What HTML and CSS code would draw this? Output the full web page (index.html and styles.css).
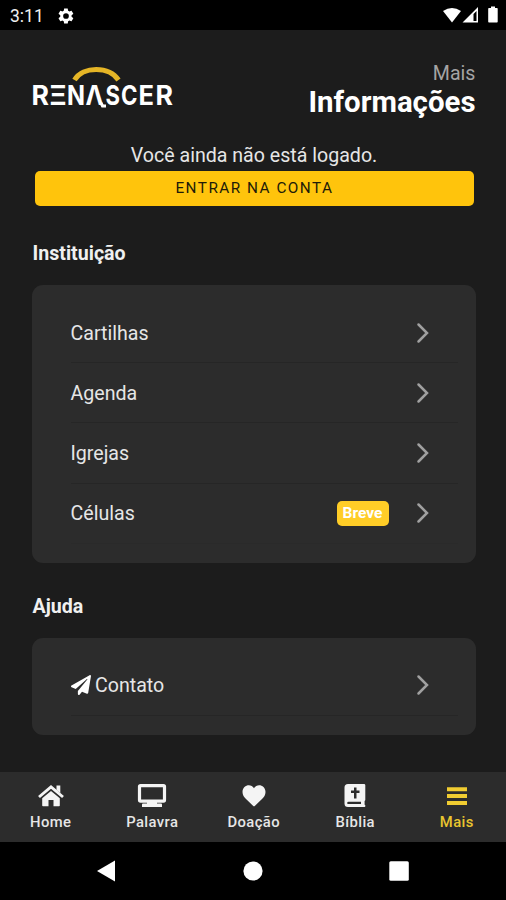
FILE: index.html
```html
<!DOCTYPE html>
<html lang="pt-BR">
<head>
<meta charset="utf-8">
<meta name="viewport" content="width=device-width, initial-scale=1">
<title>Renascer</title>
<link rel="stylesheet" href="styles.css">
</head>
<body>
<div class="status">
  <span class="clock">3:11</span>
  <svg class="gear" width="18" height="18" viewBox="0 0 24 24"><path fill="#fff" d="M19.4 13a7.5 7.5 0 0 0 0-2l2.1-1.6c.2-.2.3-.4.1-.7l-2-3.4c-.1-.2-.4-.3-.6-.2l-2.5 1c-.5-.4-1.100-.7-1.700-1l-.4-2.600c0-.3-.2-.5-.5-.5h-4c-.3 0-.5.2-.5.5L9 5.100c-.6.300-1.200.6-1.700 1l-2.500-1c-.2-.1-.5 0-.6.2l-2 3.400c-.1.3-.1.5.1.7L4.400 11a7.500 7.500 0 0 0 0 2l-2.100 1.600c-.2.2-.2.400-.1.7l2 3.400c.1.2.4.3.6.2l2.500-1c.5.400 1.100.7 1.700 1l.4 2.600c0 .3.200.5.500.5h4c.3 0 .5-.2.500-.5l.4-2.600c.6-.3 1.200-.6 1.700-1l2.500 1c.2.100.5 0 .6-.2l2-3.400c.1-.3.100-.5-.1-.7L19.400 13zM12 15.800a3.800 3.800 0 1 1 0-7.600 3.800 3.800 0 0 1 0 7.600z"/></svg>
  <svg class="signals" width="58" height="20" viewBox="0 0 58 20"><g fill="#fff"><path d="M1 4Q10 -2 19 4L10 15.500z"/><path d="M36 0v15.500H20.500zM31.500 7v7H34.500V4z" fill-rule="evenodd"/><path d="M47 1h2V-.5h4V1h2q.7 0 .7.8v13q0 .7-.7.700h-8q-.8 0-.8-.7v-13q0-.8.8-.8z"/></g></svg>
</div>
<main class="page">
  <header class="header">
    <svg class="logo" width="146" height="48" viewBox="0 0 146 48" aria-label="Renascer">
      <path d="M43.500 19C52 5 78 5 87.500 19" transform="translate(0 -1)" fill="none" stroke="#e5b526" stroke-width="5"/>
      <g class="wordmark">
        <text x="0.500" y="42.500" textLength="17.500" lengthAdjust="spacingAndGlyphs">R</text>
        <text x="18.500" y="42.500" textLength="17" lengthAdjust="spacingAndGlyphs">Ξ</text>
        <text x="36" y="42.500" textLength="18" lengthAdjust="spacingAndGlyphs">N</text>
        <text x="54.500" y="42.500" textLength="18" lengthAdjust="spacingAndGlyphs">Λ</text>
        <text x="74.500" y="42.500" textLength="14.500" lengthAdjust="spacingAndGlyphs">S</text>
        <text x="90" y="42.500" textLength="16.500" lengthAdjust="spacingAndGlyphs">C</text>
        <text x="107.500" y="42.500" textLength="15.500" lengthAdjust="spacingAndGlyphs">E</text>
        <text x="124.500" y="42.500" textLength="17.500" lengthAdjust="spacingAndGlyphs">R</text>
      </g>
      <path d="M70 41l1.500 3h3.500" fill="none" stroke="#fff" stroke-width="3"/>
    </svg>
    <div class="heading"><div class="kicker">Mais</div><h1>Informações</h1></div>
  </header>
  <section class="login">
    <p>Você ainda não está logado.</p>
    <button>ENTRAR NA CONTA</button>
  </section>
  <h2>Instituição</h2>
  <div class="card">
    <div class="row"><span>Cartilhas</span><svg class="chev" viewBox="0 0 14 22"><path d="M2.500 2.500l8.500 8.500-8.500 8.500"/></svg></div>
    <div class="row"><span>Agenda</span><svg class="chev" viewBox="0 0 14 22"><path d="M2.500 2.500l8.500 8.500-8.500 8.500"/></svg></div>
    <div class="row"><span>Igrejas</span><svg class="chev" viewBox="0 0 14 22"><path d="M2.500 2.500l8.500 8.500-8.500 8.500"/></svg></div>
    <div class="row faint"><span>Células</span><b class="badge">Breve</b><svg class="chev" viewBox="0 0 14 22"><path d="M2.500 2.500l8.500 8.500-8.500 8.500"/></svg></div>
  </div>
  <h2 class="help">Ajuda</h2>
  <div class="card">
    <div class="row contact"><svg class="plane" width="20" height="20" viewBox="0 0 512 512"><path fill="#fff" d="M476 3.200L12.500 270.600c-18.100 10.400-15.800 35.600 2.200 43.200L121 358.400l287.300-253.200c5.500-4.900 13.300 2.600 8.600 8.300L176 407v80.500c0 23.600 28.500 32.900 42.500 15.800L282 426l124.600 52.200c14.200 6 30.400-2.900 33-18.200l72-432C515 7.800 493.300-6.800 476 3.200z"/></svg><span>Contato</span><svg class="chev" viewBox="0 0 14 22"><path d="M2.500 2.500l8.500 8.500-8.500 8.500"/></svg></div>
  </div>
</main>
<nav class="tabs">
  <a><svg width="28" height="26" viewBox="0 0 28 26"><path fill="none" stroke="#f4f4f4" stroke-width="2.900" d="M2 14L14 4l12 10"/><path fill="#f4f4f4" d="M19.500 2.500h3.800v7.500l-3.800-3zM14 8l8.800 7.300v7.200q0 .8-.8.800h-5.500v-6.300h-5v6.300H6q-.8 0-.8-.8v-7.200z"/></svg><span>Home</span></a>
  <a><svg width="30" height="26" viewBox="0 0 30 26"><path fill="none" stroke="#f4f4f4" stroke-width="3.200" d="M3.500 2.600h23q1 0 1 1v13.500q0 1-1 1h-23q-1 0-1-1V3.600q0-1 1-1z"/><path fill="#f4f4f4" d="M10 19h10v1.500h4q1 0 1 1v2.500H5v-2.500q0-1 1-1h4z"/></svg><span>Palavra</span></a>
  <a><svg width="26" height="26" viewBox="0 0 26 26"><path fill="#f4f4f4" d="M13 5.200C16-.2 24.500 1.800 24.500 9c0 3-1.500 5-3.500 7l-7 6.800q-1 1-2 0L5 16c-2-2-3.500-4-3.500-7C1.500 1.800 10 -.2 13 5.200z"/></svg><span>Doação</span></a>
  <a><svg width="26" height="26" viewBox="0 0 26 26"><path fill="#f4f4f4" fill-rule="evenodd" d="M6 1h16q1.300 0 1.300 1.300v14.500q0 .8-.7 1.200v3.800q.7.200.7.800v.7q0 .7-.7.700H6q-3.500 0-3.500-3.500v-16Q2.500 1 6 1zM12 4.500v3H9v2.500h3V15.500h2.500V10h3V7.500h-3v-3zM6.500 18.700q-1.300 0-1.300 1.200t1.300 1.200H19v-2.400z"/></svg><span>Bíblia</span></a>
  <a class="active"><svg width="26" height="26" viewBox="0 0 26 26"><path stroke="#f0cc31" stroke-width="4" d="M3 6.200h20M3 13h20M3 20h20"/></svg><span>Mais</span></a>
</nav>
<div class="system">
  <svg width="24" height="24" viewBox="0 0 24 24"><path fill="#fff" d="M3 12L21 1.500v21z"/></svg>
  <svg width="24" height="24" viewBox="0 0 24 24"><circle cx="12" cy="12" r="9.600" fill="#fff"/></svg>
  <svg width="24" height="24" viewBox="0 0 24 24"><rect x="2.300" y="2.300" width="19.500" height="19.500" rx="1.500" fill="#fff"/></svg>
</div>
</body>
</html>
```
FILE: styles.css
```css
* { box-sizing: border-box; }
body {
  margin: 0;
  width: 506px;
  height: 900px;
  overflow: hidden;
  display: flex;
  flex-direction: column;
  background: #1c1c1c;
  color: #e6e6e6;
  font-family: Roboto, "Liberation Sans", sans-serif;
}
svg { display: block; flex: none; }
.status {
  height: 30px;
  background: #000;
  display: flex;
  align-items: center;
  padding: 1px 6px 0 10px;
}
.clock { font-size: 17.5px; width: 47px; color: #f0f0f0; }
.signals { margin-left: auto; margin-top: 3px; overflow: visible; }
.page { flex: 1; padding: 0 30.5px 0 32.5px; }
.header {
  height: 112px;
  padding-top: 32px;
  display: flex;
  justify-content: space-between;
}
.wordmark {
  font: 700 27px Inter, sans-serif;
  fill: #fff;
}
.logo { margin-left: -2px; overflow: visible; }
.heading { text-align: right; }
.kicker { font-size: 19.6px; line-height: 22px; height: 22px; padding-top: 1px; color: #a4a4a4; }
h1 { margin: 0; font-size: 29.4px; line-height: 36px; font-weight: 700; color: #fff; }
.login { padding: 0 2px; text-align: center; }
.login p { margin: 0; padding-top: 1px; font-size: 19.6px; line-height: 26px; height: 29px; }
button {
  display: block;
  width: 100%;
  height: 35px;
  border: 0;
  border-radius: 5px;
  background: #ffc40c;
  color: #211b08;
  font: 400 15.3px/33px Roboto, sans-serif;
  letter-spacing: 1.5px;
  padding: 0 0 1px 1px;
}
h2 { margin: 35px 0 19px; font-size: 19.6px; line-height: 25px; color: #f0f0f0; }
.card {
  background: #2c2c2c;
  border-radius: 11px;
  margin: 0 0 0 -.5px;
  padding: 18px 18px 19px 38.5px;
}
.row {
  height: 60.2px;
  border-bottom: 1px solid #262626;
  display: flex;
  align-items: center;
  font-size: 19.6px;
  padding-right: 28px;
}
.row span { padding-top: 1px; }
.faint { border-color: #2a2a2a; }
.chev { width: 14px; height: 22px; margin-left: auto; }
.chev path { fill: none; stroke: #a0a0a0; stroke-width: 2.5; stroke-linecap: round; }
.badge {
  margin-left: auto;
  width: 52px;
  height: 25px;
  border-radius: 5px;
  background: #ffcd27;
  color: #fff;
  font-size: 15.5px;
  line-height: 25px;
  text-align: center;
}
.badge + .chev { margin-left: 27px; }
.help { margin-top: 31px; }
.contact span { padding-top: 0; }
.plane { margin-right: 4.5px; }
.tabs {
  height: 70px;
  background: #2c2c2c;
  display: grid;
  grid-template-columns: repeat(5, 101.5px);
  padding-top: 11px;
}
.tabs a {
  display: flex;
  flex-direction: column;
  align-items: center;
  font-size: 14.8px;
  line-height: 22px;
  letter-spacing: .4px;
  font-weight: 500;
  gap: 2px;
}
.tabs .active { color: #e9c52f; }
.system {
  height: 58px;
  background: #000;
  display: flex;
  justify-content: space-between;
  align-items: center;
  padding: 0 95px 0 94px;
}
```
